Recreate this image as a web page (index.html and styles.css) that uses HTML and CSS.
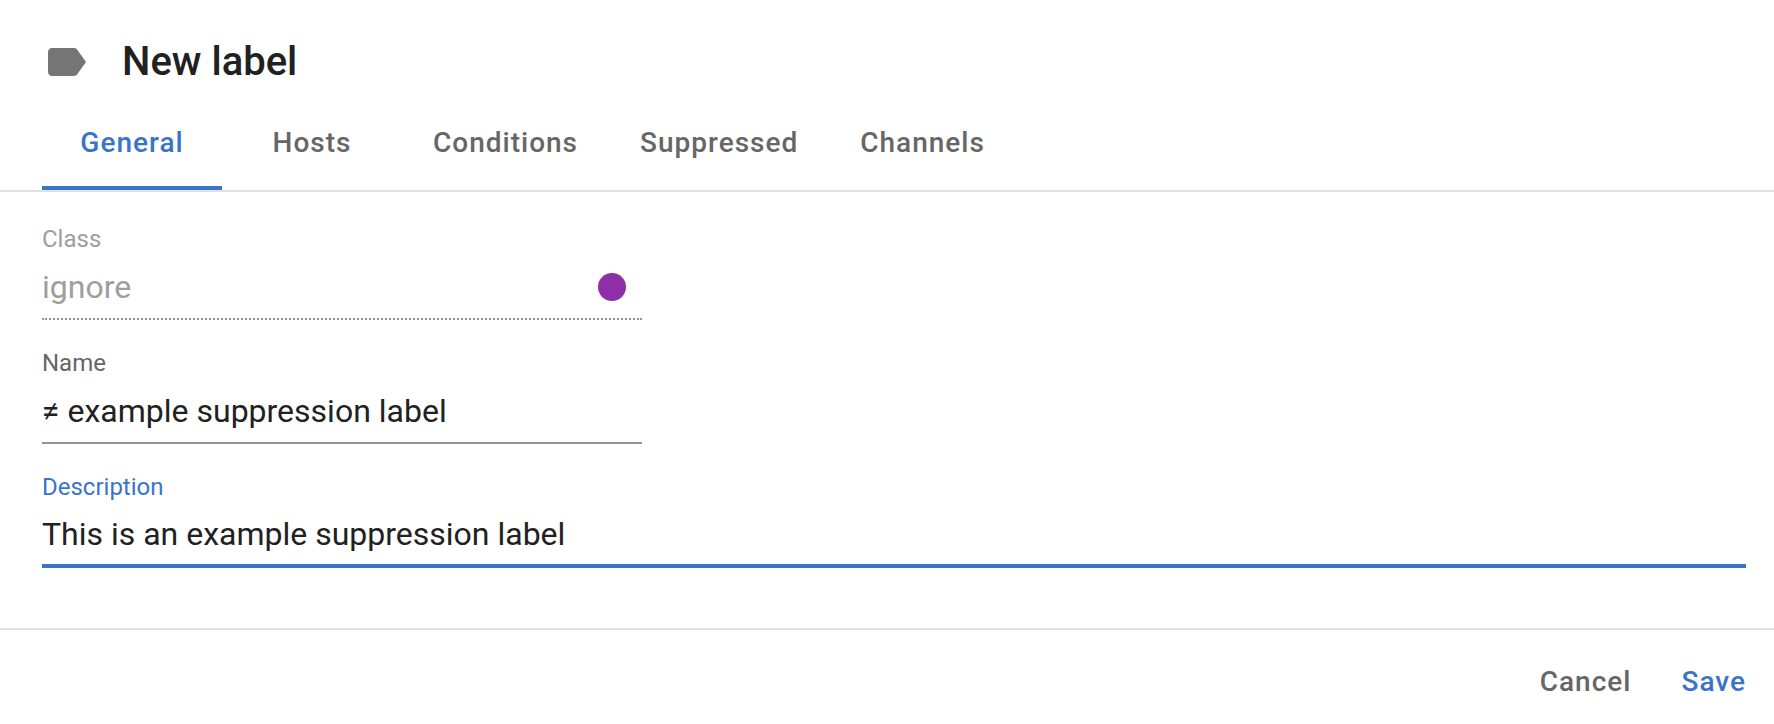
FILE: index.html
```html
<!DOCTYPE html>
<html lang="en">
<head>
<meta charset="utf-8">
<title>New label</title>
<link rel="stylesheet" href="styles.css">
</head>
<body>
<form class="dialog">
  <header class="header">
    <svg class="header-icon" viewBox="0 0 24 24" aria-hidden="true"><path d="M17.63 5.84C17.27 5.33 16.67 5 16 5L5 5.01C3.9 5.01 3 5.9 3 7v10c0 1.1.9 1.99 2 1.99L16 19c.67 0 1.27-.33 1.63-.84L22 12l-4.37-6.16z"/></svg>
    <h1 class="title">New label</h1>
  </header>
  <nav class="tabs" role="tablist">
    <button class="tab tab-active" type="button" role="tab" aria-selected="true">General</button>
    <button class="tab" type="button" role="tab">Hosts</button>
    <button class="tab" type="button" role="tab">Conditions</button>
    <button class="tab" type="button" role="tab">Suppressed</button>
    <button class="tab" type="button" role="tab">Channels</button>
  </nav>
  <main class="content">
    <div class="field field-short field-disabled">
      <label class="label" for="class">Class</label>
      <div class="control">
        <input class="input" id="class" type="text" value="ignore" disabled>
        <span class="swatch"></span>
      </div>
    </div>
    <div class="field field-short">
      <label class="label" for="name">Name</label>
      <div class="control">
        <input class="input" id="name" type="text" value="≠ example suppression label">
      </div>
    </div>
    <div class="field field-focused">
      <label class="label" for="description">Description</label>
      <div class="control">
        <input class="input" id="description" type="text" value="This is an example suppression label">
      </div>
    </div>
  </main>
  <footer class="footer">
    <button class="action" type="button">Cancel</button>
    <button class="action action-primary" type="submit">Save</button>
  </footer>
</form>
</body>
</html>
```
FILE: styles.css
```css
* { box-sizing: border-box; }
body {
  margin: 0;
  background: #fff;
  color: #212121;
  font-family: Roboto, "Liberation Sans", sans-serif;
}
.header {
  display: flex;
  align-items: center;
  gap: 32px;
  padding: 38px 42px 0;
}
.header-icon { width: 48px; height: 48px; fill: #757575; }
.title { margin: 0; font-size: 40px; line-height: 48px; font-weight: 500; }
.tabs {
  display: flex;
  height: 106px;
  padding: 0 42px;
  border-bottom: 2px solid #e0e0e0;
}
.tab {
  min-width: 180px;
  padding: 14px 31px 0;
  border: 0;
  border-bottom: 4px solid transparent;
  background: none;
  color: #666;
  font: 500 28px/32px Roboto, sans-serif;
  letter-spacing: 1px;
}
.tab-active { border-color: #3a74c9; color: #3a74c9; }
.content { padding: 32px 28px 60px 42px; }
.field { margin-bottom: 28px; }
.field:last-child { margin-bottom: 0; }
.field-short { width: 600px; max-width: 100%; }
.label {
  display: block;
  padding-bottom: 2px;
  color: #666;
  font-size: 24px;
  line-height: 30px;
}
.control {
  display: flex;
  align-items: center;
  height: 64px;
  padding-right: 16px;
  border-bottom: 2px solid #949494;
}
.input {
  flex: 1;
  min-width: 0;
  padding: 0;
  border: 0;
  outline: 0;
  background: none;
  color: #212121;
  font: 400 32px/40px Roboto, sans-serif;
}
.swatch { width: 28px; height: 28px; border-radius: 50%; background: #8e2fa8; }
.field-disabled .label, .field-disabled .input { color: #9e9e9e; }
.field-disabled .control { border-bottom-style: dotted; }
.field-focused .label { color: #3a74c9; }
.field-focused .control { border-bottom: 4px solid #3a74c9; }
.footer {
  display: flex;
  justify-content: flex-end;
  gap: 50px;
  padding: 34px 28px 24px;
  border-top: 2px solid #e0e0e0;
}
.action {
  padding: 0;
  border: 0;
  background: none;
  color: #666;
  font: 500 28px/36px Roboto, sans-serif;
  letter-spacing: 1px;
}
.action-primary { color: #3a74c9; }
```
